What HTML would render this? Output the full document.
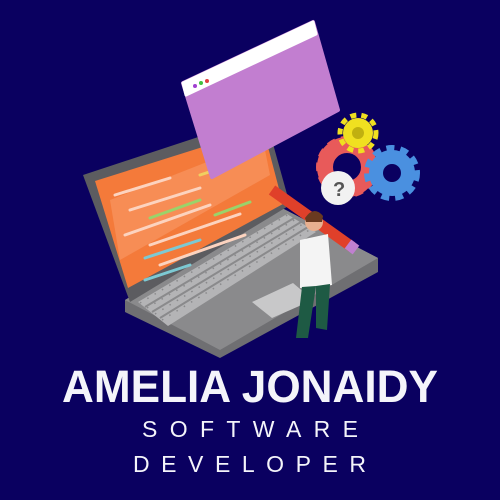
<!DOCTYPE html>
<html><head><style>
html,body{margin:0;padding:0;background:#0a0060;}
svg{display:block}
</style></head><body>
<svg width="500" height="500" viewBox="0 0 500 500" xmlns="http://www.w3.org/2000/svg">
<rect width="500" height="500" fill="#0a0060"/>
<!-- laptop base -->
<polygon points="125,300 280,207 378,258 378,272 220,358 125,312" fill="#6f6f72"/>
<polygon points="125,300 280,207 378,258 220,350" fill="#8a8a8c"/>
<!-- keyboard -->
<polygon points="138,302 287,214 316,232 168,326" fill="#b4b4b6"/>
<g stroke="#8a8a8c" stroke-width="2">
<line x1="145" y1="307" x2="294" y2="218"/>
<line x1="152" y1="312" x2="301" y2="222"/>
<line x1="160" y1="318" x2="308" y2="227"/>
</g>
<g stroke="#8a8a8c" stroke-width="1.5" stroke-dasharray="1.5 7">
<line x1="140" y1="303" x2="289" y2="214"/>
<line x1="147" y1="308" x2="296" y2="219"/>
<line x1="155" y1="314" x2="303" y2="224"/>
<line x1="162" y1="320" x2="311" y2="229"/>
</g>
<!-- trackpad -->
<polygon points="252,302 293,283 313,300 272,318" fill="#c8c8c9"/>
<!-- lid -->
<polygon points="83,175 265,115 290,205 130,302" fill="#5c5c60"/>
<polygon points="95,181 263,128 283,204 128,288" fill="#f47a3a"/>
<polygon points="110,200 263,140 270,175 120,260" fill="#f9a070" opacity="0.5"/>
<g stroke-width="3" stroke-linecap="round">
<line x1="115" y1="195" x2="170" y2="178" stroke="#fcd3bf"/>
<line x1="130" y1="210" x2="200" y2="188" stroke="#fcd3bf"/>
<line x1="150" y1="218" x2="200" y2="200" stroke="#9ad36a"/>
<line x1="125" y1="235" x2="210" y2="205" stroke="#fcd3bf"/>
<line x1="150" y1="245" x2="240" y2="214" stroke="#fcd3bf"/>
<line x1="145" y1="258" x2="200" y2="240" stroke="#7cc9d3"/>
<line x1="160" y1="265" x2="245" y2="235" stroke="#fcd3bf"/>
<line x1="145" y1="280" x2="190" y2="265" stroke="#7cc9d3"/>
<line x1="200" y1="175" x2="240" y2="162" stroke="#f0d060"/>
<line x1="215" y1="215" x2="250" y2="202" stroke="#9ad36a"/>
</g>
<!-- floating window -->
<polygon points="183,83 313,22 338,110 212,177" fill="#c27ed0" stroke="#c27ed0" stroke-width="4" stroke-linejoin="round"/>
<polygon points="183,83 313,22 316,34 186,95" fill="#ffffff" stroke="#fff" stroke-width="3" stroke-linejoin="round"/>
<circle cx="195" cy="86" r="2" fill="#a040d0"/>
<circle cx="201" cy="83" r="2" fill="#40c040"/>
<circle cx="207" cy="81" r="2" fill="#e04040"/>
<!-- gears -->
<circle cx="347" cy="167" r="22" fill="none" stroke="#e85a5a" stroke-width="16"/>
<circle cx="347" cy="167" r="28" fill="none" stroke="#e85a5a" stroke-width="6" stroke-dasharray="8 6"/>
<circle cx="358" cy="133" r="15" fill="#f0e020"/>
<circle cx="358" cy="133" r="18" fill="none" stroke="#f0e020" stroke-width="5" stroke-dasharray="6 5"/>
<circle cx="358" cy="133" r="6" fill="#c0b010"/>
<circle cx="392" cy="173" r="16" fill="none" stroke="#4a90e0" stroke-width="14"/>
<circle cx="392" cy="173" r="25" fill="none" stroke="#4a90e0" stroke-width="6" stroke-dasharray="8 6"/>
<circle cx="338" cy="188" r="17" fill="#f2f2f2"/>
<text x="333" y="196" font-family="Liberation Sans, sans-serif" font-weight="bold" font-size="20" fill="#555">?</text>
<!-- pencil -->
<line x1="272" y1="190" x2="352" y2="247" stroke="#e0402a" stroke-width="11" stroke-linecap="butt"/>
<line x1="348" y1="244" x2="356" y2="250" stroke="#c080d0" stroke-width="11"/>
<!-- person -->
<path d="M300 240 L328 234 L332 285 L300 288 Z" fill="#f4f4f4"/>
<path d="M302 287 L316 286 L308 338 L296 338 Z M316 286 L330 284 L327 330 L316 328 Z" fill="#1e5a44"/>
<circle cx="314" cy="222" r="9" fill="#e8b090"/>
<path d="M305 218 Q314 205 323 216 L322 222 L306 222 Z" fill="#6a3a20"/>
<!-- text -->
<g font-family="Liberation Sans, sans-serif" fill="#f4f4fa" text-anchor="start">
<text x="62" y="402" font-size="45" font-weight="bold" textLength="376" lengthAdjust="spacingAndGlyphs">AMELIA JONAIDY</text>
<text x="142" y="437" font-size="23" textLength="216" lengthAdjust="spacing">SOFTWARE</text>
<text x="133" y="472" font-size="23" textLength="233" lengthAdjust="spacing">DEVELOPER</text>
</g>
</svg>
</body></html>
